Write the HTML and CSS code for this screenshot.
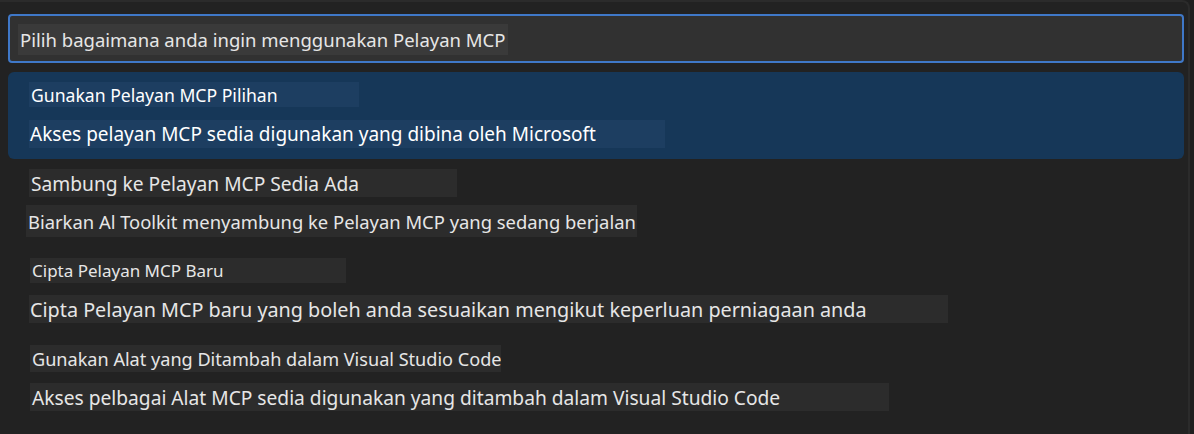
FILE: index.html
```html
<!DOCTYPE html>
<html lang="ms">
<head>
    <meta charset="UTF-8">
    <meta name="viewport" content="width=device-width, initial-scale=1.0">
    <title>Pelayan MCP</title>
    <link rel="stylesheet" href="styles.css">
</head>

<body>
    <div class="quick-pick">
        <div class="input-box">
            <div class="label label-input">Pilih bagaimana anda ingin menggunakan Pelayan MCP</div>
        </div>
        <div class="list">
            <div class="item selected">
                <div class="label title t1">Gunakan Pelayan MCP Pilihan</div>
                <div class="label desc d1">Akses pelayan MCP sedia digunakan yang dibina oleh Microsoft</div>
            </div>
            <div class="item">
                <div class="label title t2">Sambung ke Pelayan MCP Sedia Ada</div>
                <div class="label desc d2">Biarkan Al Toolkit menyambung ke Pelayan MCP yang sedang berjalan</div>
            </div>
            <div class="item">
                <div class="label title t3">Cipta Pelayan MCP Baru</div>
                <div class="label desc d3">Cipta Pelayan MCP baru yang boleh anda sesuaikan mengikut keperluan perniagaan anda</div>
            </div>
            <div class="item">
                <div class="label title t4">Gunakan Alat yang Ditambah dalam Visual Studio Code</div>
                <div class="label desc d4">Akses pelbagai Alat MCP sedia digunakan yang ditambah dalam Visual Studio Code</div>
            </div>
        </div>
    </div>
</body>
</html>
```

FILE: styles.css
```css
body {
    margin: 0;
    background-color: #1f1f1f;
    font-family: "Noto Sans", "Open Sans", sans-serif;
    color: #e6e6e6;
    overflow: hidden;
}
.quick-pick {
    width: 1190px;
    height: 434px;
    box-sizing: border-box;
    border-top: 2px solid #2b2b2b;
    border-right: 2px solid #2b2b2b;
    border-top-right-radius: 8px;
    background-color: #222222;
    padding: 12px 0 0 8px;
}
.input-box {
    width: 1176px;
    height: 49px;
    box-sizing: border-box;
    border: 2px solid #3f78c8;
    border-radius: 4px;
    background-color: #313131;
    padding: 8px 0 0 8px;
}
.list {
    margin-top: 9px;
    width: 1176px;
}
.item {
    height: 87px;
    box-sizing: border-box;
    padding-left: 21px;
    display: flex;
    flex-direction: column;
    align-items: flex-start;
}
.selected {
    background-color: #163758;
    border-radius: 6px;
    color: #ffffff;
}
.label {
    display: flex;
    align-items: center;
    flex-shrink: 0;
    box-sizing: border-box;
    padding-left: 2px;
    background-color: #2c2c2c;
    white-space: nowrap;
    overflow: hidden;
}
.selected .label {
    background-color: #1d3e61;
}
.label-input {
    width: 490px;
    height: 31px;
    background-color: #3a3a3a;
    font-size: 18.5px;
}

/* rows, each placed inside its 87px item */
.t1 { width: 330px; height: 25px; margin-top: 10px; font-size: 17.6px; }
.d1 { width: 636px; height: 28px; margin-top: 13px; font-size: 19px; padding-left: 1px; }
.t2 { width: 428px; height: 28px; margin-top: 10px; font-size: 19.2px; }
.d2 { width: 611px; height: 32px; margin-top: 8px; margin-left: -3px; font-size: 18.4px; }
.t3 { width: 316px; height: 25px; margin-top: 12px; margin-left: 1px; font-size: 17px; }
.d3 { width: 919px; height: 28px; margin-top: 12px; font-size: 19.8px; padding-left: 1px; }
.t4 { width: 471px; height: 27px; margin-top: 12px; margin-left: 1px; font-size: 18.1px; }
.d4 { width: 859px; height: 28px; margin-top: 11px; margin-left: 1px; font-size: 19.2px; }
```
